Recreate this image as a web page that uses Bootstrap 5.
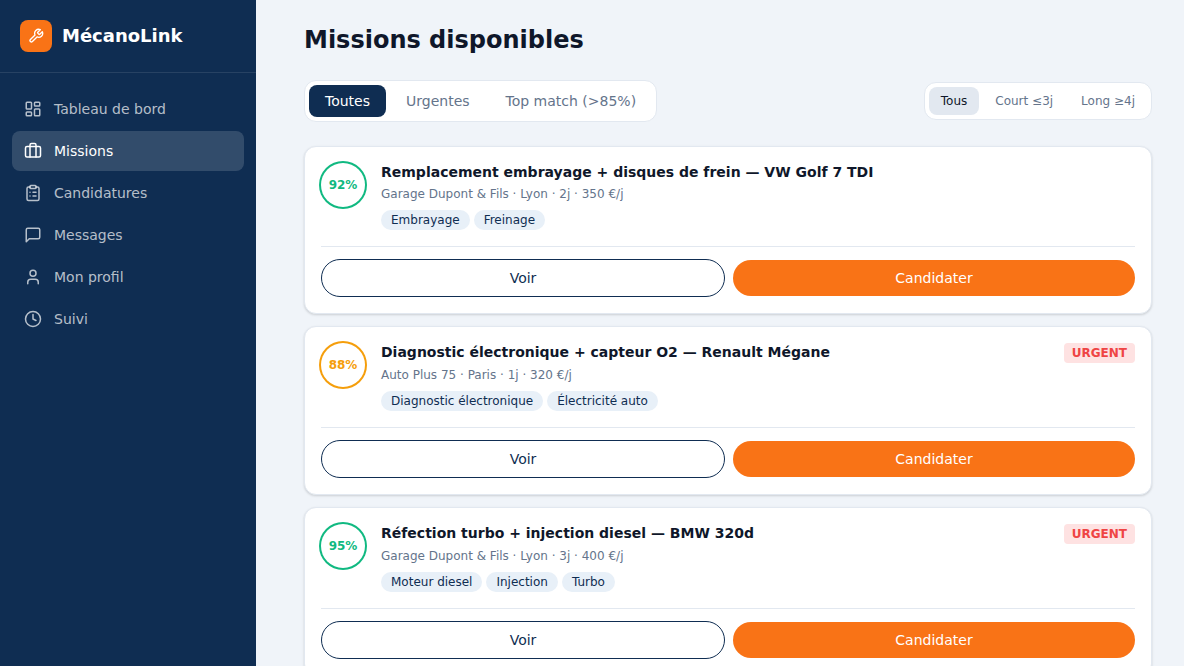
<!DOCTYPE html>
<html lang="fr">
<head>
<meta charset="utf-8">
<meta name="viewport" content="width=device-width, initial-scale=1">
<title>MécanoLink – Missions</title>
<link href="https://cdn.jsdelivr.net/npm/bootstrap@5.3.0/dist/css/bootstrap.min.css" rel="stylesheet">
<style>
  :root { --navy: #0f2d52; --orange: #f97316; --ink: #0f172a; --muted: #64748b; --line: #e2e8f0; }
  body { font-family: "DejaVu Sans", sans-serif; font-size: 14px; line-height: 20px; color: var(--ink); background: #f0f4f9; }

  .sidebar { width: 256px; height: 100vh; background: var(--navy); }
  .brand { padding: 20px; gap: 10px; border-bottom: 1px solid rgba(255,255,255,.1); color: #fff; font-size: 18px; line-height: 28px; }
  .brand-mark { width: 32px; height: 32px; border-radius: 8px; background: var(--orange); }
  .side-nav { padding: 16px 12px; gap: 2px; }
  .side-nav .nav-link { padding: 10px 12px; gap: 12px; border-radius: 8px; color: rgba(255,255,255,.7); }
  .side-nav .nav-link.active { color: #fff; background: rgba(255,255,255,.15); }
  .line-icon { fill: none; stroke: currentColor; stroke-width: 2; stroke-linecap: round; stroke-linejoin: round; flex: none; }

  .page { padding: 24px 32px 24px 48px; min-width: 0; }
  h1 { font-size: 24px; line-height: 32px; }
  .segmented { gap: 4px; padding: 4px; background: #fff; border: 1px solid var(--line); border-radius: 12px; }
  .segmented .btn { padding: 6px 16px; font-size: 14px; line-height: 20px; border: 0; border-radius: 8px; color: var(--muted); }
  .segmented .btn.active { background: var(--navy); color: #fff; }
  .segmented.compact .btn { padding: 6px 12px; font-size: 12px; line-height: 16px; }
  .segmented.compact .btn.active { background: var(--line); color: var(--ink); }

  .mission-list { gap: 12px; }
  .mission { border: 1px solid var(--line); border-radius: 12px; box-shadow: 0 1px 3px rgba(0,0,0,.1), 0 1px 2px rgba(0,0,0,.06); }
  .score { width: 44px; height: 44px; font-size: 12px; line-height: 16px; box-shadow: 0 0 0 2px currentColor; }
  .score-high { color: #10b981; }
  .score-mid { color: #f59e0b; }
  .mission h2 { font-size: 14px; line-height: 19px; }
  .meta { margin: 4px 0 8px; font-size: 12px; line-height: 16px; color: var(--muted); }
  .skill { padding: 2px 10px; font-size: 12px; line-height: 16px; border-radius: 10px; background: #e8f0f8; color: var(--navy); }
  .urgent { padding: 2px 8px; font-size: 12px; line-height: 16px; border-radius: 4px; background: #fee2e2; color: #ef4444; }
  .actions { margin-top: 16px; padding-top: 12px; border-top: 1px solid var(--line); }
  .actions .btn { flex: 1 1 0; padding: 8px 16px; font-size: 14px; line-height: 20px; }
  .btn-view { border: 1px solid var(--navy); color: var(--navy); }
  .btn-apply { border: 0; background: var(--orange); color: #fff; }
  .btn-view:hover { background: var(--navy); color: #fff; }
  .btn-apply:hover { background: #ea580c; color: #fff; }
</style>
</head>
<body>
<div class="d-flex align-items-start">
  <aside class="sidebar sticky-top flex-shrink-0">
    <div class="brand d-flex align-items-center fw-bold">
      <span class="brand-mark d-flex align-items-center justify-content-center">
        <svg class="line-icon" width="16" height="16" viewBox="0 0 24 24" aria-hidden="true"><path d="M14.7 6.3a1 1 0 0 0 0 1.4l1.6 1.6a1 1 0 0 0 1.4 0l3.77-3.77a6 6 0 0 1-7.94 7.94l-6.91 6.91a2.12 2.12 0 0 1-3-3l6.91-6.91a6 6 0 0 1 7.94-7.94l-3.76 3.76z"/></svg>
      </span>
      <span>MécanoLink</span>
    </div>
    <nav class="side-nav nav flex-column" aria-label="Navigation principale">
      <a class="nav-link d-flex align-items-center" href="#">
        <svg class="line-icon" width="18" height="18" viewBox="0 0 24 24" aria-hidden="true"><rect x="3" y="3" width="7" height="9" rx="1"/><rect x="14" y="3" width="7" height="5" rx="1"/><rect x="14" y="12" width="7" height="9" rx="1"/><rect x="3" y="16" width="7" height="5" rx="1"/></svg>
        Tableau de bord
      </a>
      <a class="nav-link active d-flex align-items-center" href="#" aria-current="page">
        <svg class="line-icon" width="18" height="18" viewBox="0 0 24 24" aria-hidden="true"><path d="M16 20V4a2 2 0 0 0-2-2h-4a2 2 0 0 0-2 2v16"/><rect x="2" y="6" width="20" height="14" rx="2"/></svg>
        Missions
      </a>
      <a class="nav-link d-flex align-items-center" href="#">
        <svg class="line-icon" width="18" height="18" viewBox="0 0 24 24" aria-hidden="true"><rect x="8" y="2" width="8" height="4" rx="1"/><path d="M16 4h2a2 2 0 0 1 2 2v14a2 2 0 0 1-2 2H6a2 2 0 0 1-2-2V6a2 2 0 0 1 2-2h2M12 11h4M12 16h4M8 11h.01M8 16h.01"/></svg>
        Candidatures
      </a>
      <a class="nav-link d-flex align-items-center" href="#">
        <svg class="line-icon" width="18" height="18" viewBox="0 0 24 24" aria-hidden="true"><path d="M21 15a2 2 0 0 1-2 2H7l-4 4V5a2 2 0 0 1 2-2h14a2 2 0 0 1 2 2z"/></svg>
        Messages
      </a>
      <a class="nav-link d-flex align-items-center" href="#">
        <svg class="line-icon" width="18" height="18" viewBox="0 0 24 24" aria-hidden="true"><path d="M19 21v-2a4 4 0 0 0-4-4H9a4 4 0 0 0-4 4v2"/><circle cx="12" cy="7" r="4"/></svg>
        Mon profil
      </a>
      <a class="nav-link d-flex align-items-center" href="#">
        <svg class="line-icon" width="18" height="18" viewBox="0 0 24 24" aria-hidden="true"><circle cx="12" cy="12" r="10"/><path d="M12 6v6l4 2"/></svg>
        Suivi
      </a>
    </nav>
  </aside>

  <main class="page flex-grow-1">
    <h1 class="fw-bold mb-4">Missions disponibles</h1>

    <div class="d-flex flex-wrap align-items-center justify-content-between gap-2 mb-4">
      <div class="segmented d-flex" role="group" aria-label="Filtrer les missions">
        <button type="button" class="btn active" aria-pressed="true">Toutes</button>
        <button type="button" class="btn" aria-pressed="false">Urgentes</button>
        <button type="button" class="btn" aria-pressed="false">Top match (&gt;85%)</button>
      </div>
      <div class="segmented compact d-flex" role="group" aria-label="Filtrer par durée">
        <button type="button" class="btn active" aria-pressed="true">Tous</button>
        <button type="button" class="btn" aria-pressed="false">Court ≤3j</button>
        <button type="button" class="btn" aria-pressed="false">Long ≥4j</button>
      </div>
    </div>

    <div class="mission-list d-flex flex-column">
      <article class="mission card p-3">
        <div class="d-flex gap-3">
          <div class="score score-high rounded-circle d-flex align-items-center justify-content-center flex-shrink-0 fw-bold">92%</div>
          <div class="flex-grow-1">
            <div class="d-flex align-items-start justify-content-between gap-2">
              <h2 class="fw-bold mb-0">Remplacement embrayage + disques de frein — VW Golf 7 TDI</h2>
            </div>
            <p class="meta">Garage Dupont &amp; Fils · Lyon · 2j · 350 €/j</p>
            <div class="d-flex flex-wrap gap-1">
              <span class="skill">Embrayage</span>
              <span class="skill">Freinage</span>
            </div>
          </div>
        </div>
        <div class="actions d-flex align-items-center gap-2">
          <button type="button" class="btn btn-view rounded-pill">Voir</button>
          <button type="button" class="btn btn-apply rounded-pill">Candidater</button>
        </div>
      </article>

      <article class="mission card p-3">
        <div class="d-flex gap-3">
          <div class="score score-mid rounded-circle d-flex align-items-center justify-content-center flex-shrink-0 fw-bold">88%</div>
          <div class="flex-grow-1">
            <div class="d-flex align-items-start justify-content-between gap-2">
              <h2 class="fw-bold mb-0">Diagnostic électronique + capteur O2 — Renault Mégane</h2>
              <span class="urgent fw-bold flex-shrink-0">URGENT</span>
            </div>
            <p class="meta">Auto Plus 75 · Paris · 1j · 320 €/j</p>
            <div class="d-flex flex-wrap gap-1">
              <span class="skill">Diagnostic électronique</span>
              <span class="skill">Électricité auto</span>
            </div>
          </div>
        </div>
        <div class="actions d-flex align-items-center gap-2">
          <button type="button" class="btn btn-view rounded-pill">Voir</button>
          <button type="button" class="btn btn-apply rounded-pill">Candidater</button>
        </div>
      </article>

      <article class="mission card p-3">
        <div class="d-flex gap-3">
          <div class="score score-high rounded-circle d-flex align-items-center justify-content-center flex-shrink-0 fw-bold">95%</div>
          <div class="flex-grow-1">
            <div class="d-flex align-items-start justify-content-between gap-2">
              <h2 class="fw-bold mb-0">Réfection turbo + injection diesel — BMW 320d</h2>
              <span class="urgent fw-bold flex-shrink-0">URGENT</span>
            </div>
            <p class="meta">Garage Dupont &amp; Fils · Lyon · 3j · 400 €/j</p>
            <div class="d-flex flex-wrap gap-1">
              <span class="skill">Moteur diesel</span>
              <span class="skill">Injection</span>
              <span class="skill">Turbo</span>
            </div>
          </div>
        </div>
        <div class="actions d-flex align-items-center gap-2">
          <button type="button" class="btn btn-view rounded-pill">Voir</button>
          <button type="button" class="btn btn-apply rounded-pill">Candidater</button>
        </div>
      </article>
    </div>
  </main>
</div>
<script src="https://cdn.jsdelivr.net/npm/bootstrap@5.3.0/dist/js/bootstrap.bundle.min.js"></script>
</body>
</html>
